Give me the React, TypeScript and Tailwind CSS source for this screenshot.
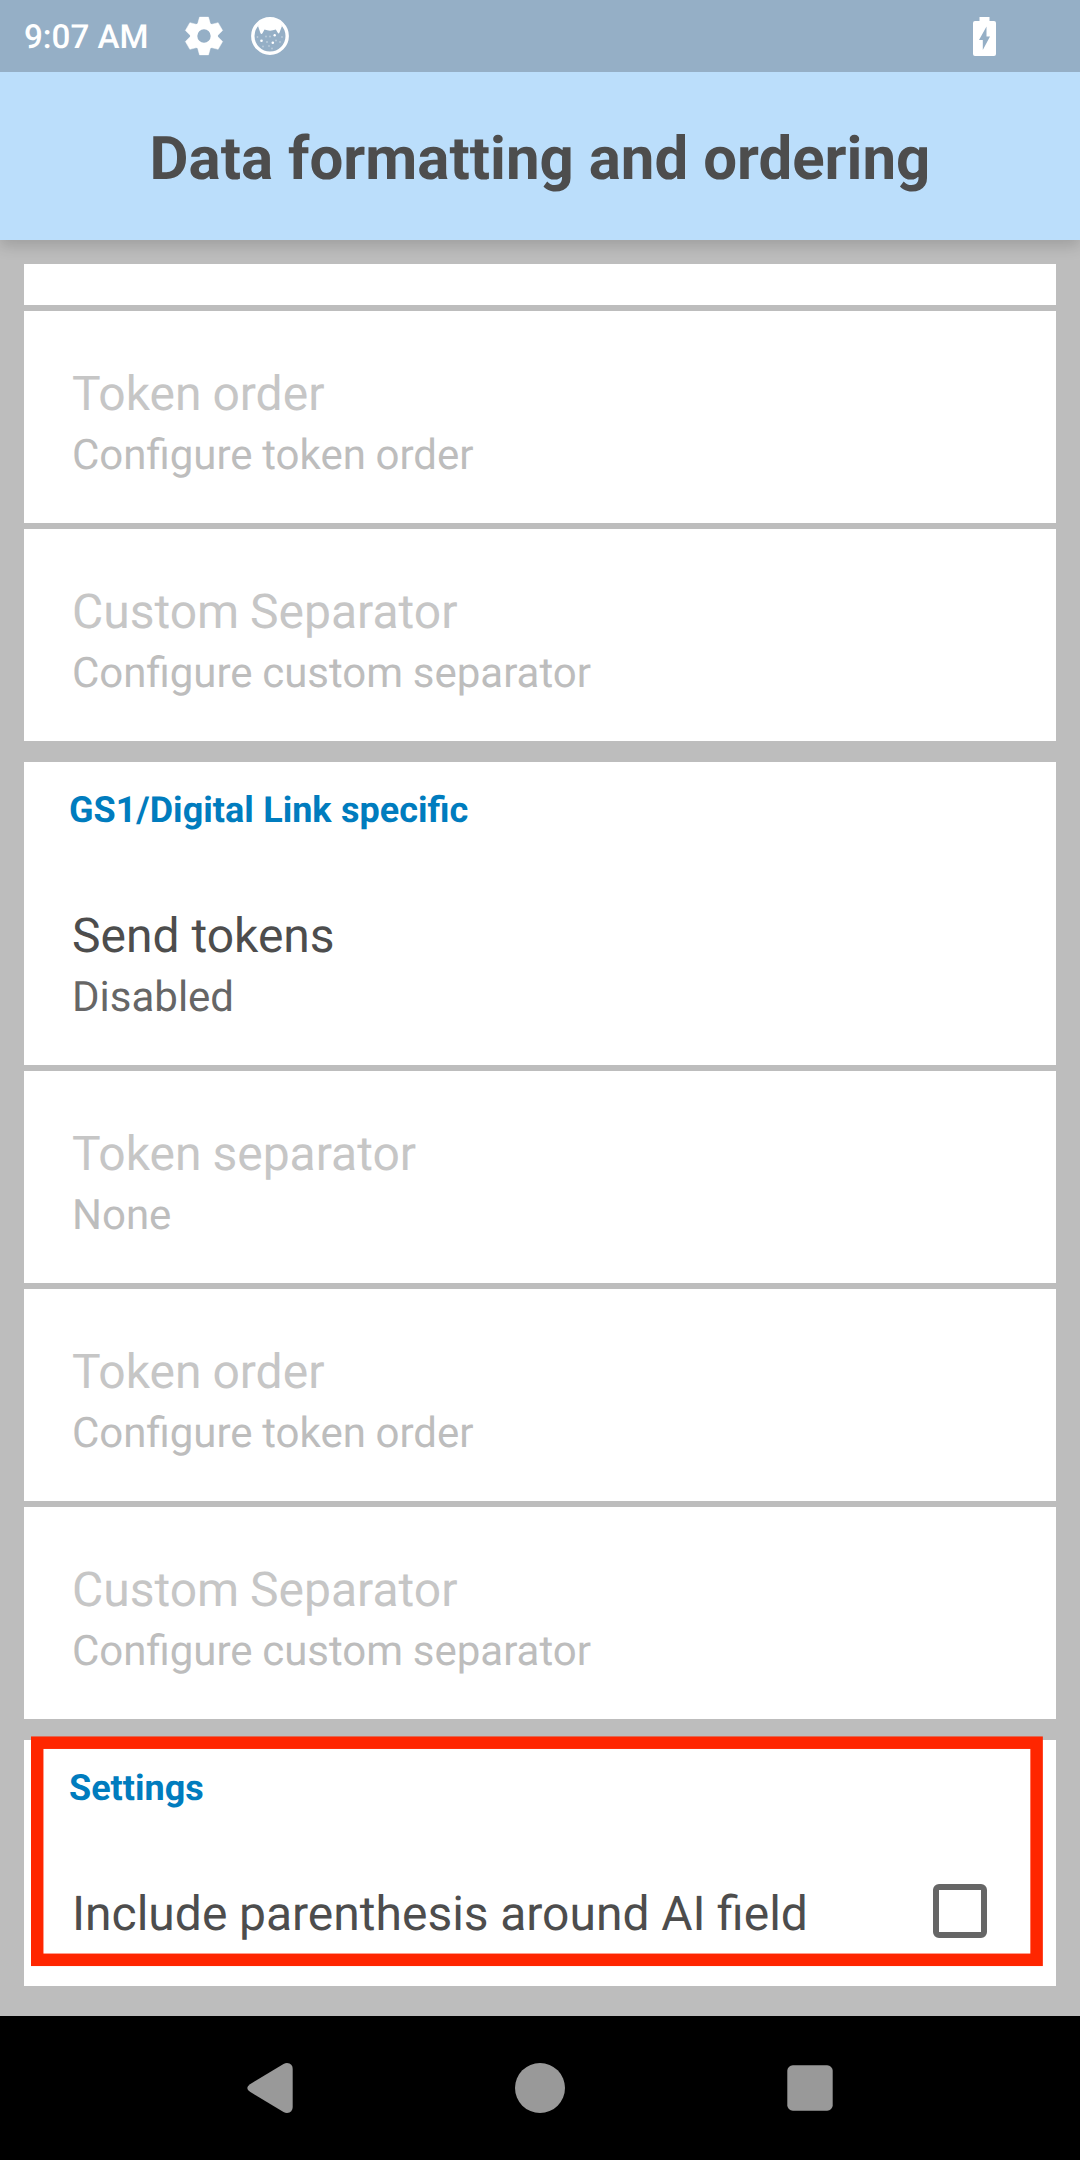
function Preference({ title, summary, disabled = false }: { title: string; summary: string; disabled?: boolean }) {
  return (
    <div className="h-[212px] bg-white px-12 pt-[55px]">
      <div className={disabled ? "text-[48px] leading-[56px] text-[#c6c6c6] [word-spacing:-1px]" : "text-[48px] leading-[56px] text-[#4d4d4d]"}>
        {title}
      </div>
      <div className={disabled ? "pt-px text-[42px] leading-[66px] text-[#bdbdbd] [word-spacing:-0.8px]" : "pt-px text-[42px] leading-[66px] text-[#666666]"}>
        {summary}
      </div>
    </div>
  );
}

function SectionTitle({ children }: { children: string }) {
  return (
    <h2 className="h-[91px] bg-white pl-[45px] pt-[27px] text-[36px] font-bold leading-[42px] text-[#007cbe] [word-spacing:0.5px]">
      {children}
    </h2>
  );
}

function GearIcon() {
  return (
    <svg className="size-[40px]" viewBox="-20 -20 40 40" fill="currentColor">
      <circle r="10.3" fill="none" stroke="currentColor" strokeWidth="7.2" />
      {[0, 60, 120, 180, 240, 300].map((angle) => (
        <path
          key={angle}
          transform={`rotate(${angle})`}
          d="M-4.500-18.900H4.500L6.700-11Q0-8.500-6.700-11Z"
          stroke="currentColor"
          strokeWidth=".4"
          strokeLinejoin="round"
        />
      ))}
    </svg>
  );
}

function CatIcon() {
  return (
    <svg className="size-[40px]" viewBox="0 0 40 40" fill="currentColor">
      <circle cx="20" cy="20" r="17.2" fill="none" stroke="currentColor" strokeWidth="3.4" />
      <path d="M8 10Q12 2 20 2T32 10L29.500 16.500Q28.800 18.500 27.600 16.500L25.800 13.500Q20 15.800 14.500 13.500L12.600 17Q11.400 19 10.400 17Z" />
      <circle cx="11.500" cy="24.700" r="1.300" />
      <circle cx="24.700" cy="19.200" r="1.200" />
      <circle cx="22.800" cy="26.700" r="1.300" />
      <g opacity=".35">
        <circle cx="16" cy="20.500" r="1" />
        <circle cx="20" cy="20.500" r="1" />
        <circle cx="7.500" cy="21" r=".9" />
        <circle cx="32" cy="21" r=".9" />
        <circle cx="17" cy="26" r="1" />
        <circle cx="26" cy="24.500" r="1" />
        <circle cx="30" cy="26" r=".9" />
        <circle cx="13" cy="30.500" r=".9" />
        <circle cx="19" cy="30" r=".9" />
        <circle cx="22" cy="32.500" r=".9" />
      </g>
    </svg>
  );
}

function StatusBar() {
  return (
    <div className="relative z-10 flex h-[72px] items-center bg-[#95afc6] pl-6 text-white">
      <span className="w-[160px] pt-[3px] text-[33.2px] font-medium leading-[69px]">9:07 AM</span>
      <GearIcon />
      <div className="ml-[26px]">
        <CatIcon />
      </div>
      <svg className="ml-auto mr-[84px] h-[39px] w-[23px]" viewBox="0 0 23 39" fill="currentColor">
        <path fillRule="evenodd" d="M6.500 0h10v4H21q2 0 2 2v31q0 2-2 2H2q-2 0-2-2V6q0-2 2-2h4.500ZM13.500 9.500 6 23h3.800v10L17 19.500h-3.500Z" />
      </svg>
    </div>
  );
}

export default function App() {
  return (
    <div className="flex h-[2160px] w-[1080px] flex-col overflow-hidden bg-[#bdbdbd] font-['Roboto',sans-serif] [text-rendering:geometricPrecision]">
      <StatusBar />
      <header className="flex h-[168px] items-center justify-center bg-[#bbdefb] pt-[5px] shadow-[0_6px_14px_rgba(0,0,0,0.16)]">
        <h1 className="text-[60px] font-bold leading-[72px] text-[#4d4d4d]">Data formatting and ordering</h1>
      </header>

      <main className="flex flex-1 flex-col gap-[21px] px-6 pt-6">
        <section className="flex flex-col gap-[6px]">
          <div className="h-[41px] bg-white" />
          <Preference title="Token order" summary="Configure token order" disabled />
          <Preference title="Custom Separator" summary="Configure custom separator" disabled />
        </section>

        <section className="flex flex-col gap-[6px]">
          <div>
            <SectionTitle>GS1/Digital Link specific</SectionTitle>
            <Preference title="Send tokens" summary="Disabled" />
          </div>
          <Preference title="Token separator" summary="None" disabled />
          <Preference title="Token order" summary="Configure token order" disabled />
          <Preference title="Custom Separator" summary="Configure custom separator" disabled />
        </section>

        <section className="relative bg-white">
          <SectionTitle>Settings</SectionTitle>
          <div className="flex h-[155px] items-start justify-between pl-12 pr-[69px] pt-[53px]">
            <span className="pt-[2px] text-[48px] leading-[56px] text-[#4d4d4d] [word-spacing:-0.3px]">
              Include parenthesis around AI field
            </span>
            <span role="checkbox" aria-checked="false" className="size-[54px] rounded-[6px] border-6 border-[#666666]" />
          </div>
          <svg className="pointer-events-none absolute left-[7px] top-[-4px] h-[231px] w-[1012px]" viewBox="0 0 1012 231" fill="none">
            <rect x="6.200" y="6.700" width="999.400" height="217.100" stroke="#ff2600" strokeWidth="12.500" />
          </svg>
        </section>
      </main>

      <nav className="flex h-[144px] items-center justify-center gap-[220px] bg-black text-[#999999]">
        <svg className="size-[50px]" viewBox="0 0 50 50" fill="currentColor">
          <path d="M38.500 1Q40.300 0 42 0Q47.700 .5 47.700 6V44Q47.700 49.500 42 50Q40.300 50 38.500 49L5 28.800Q-.500 25 5 21.200Z" />
        </svg>
        <svg className="size-[50px]" viewBox="0 0 50 50" fill="currentColor">
          <circle cx="25" cy="25" r="25" />
        </svg>
        <svg className="size-[50px]" viewBox="0 0 50 50" fill="currentColor">
          <rect x="2.300" y="2.300" width="45.400" height="45.400" rx="5.500" />
        </svg>
      </nav>
    </div>
  );
}
